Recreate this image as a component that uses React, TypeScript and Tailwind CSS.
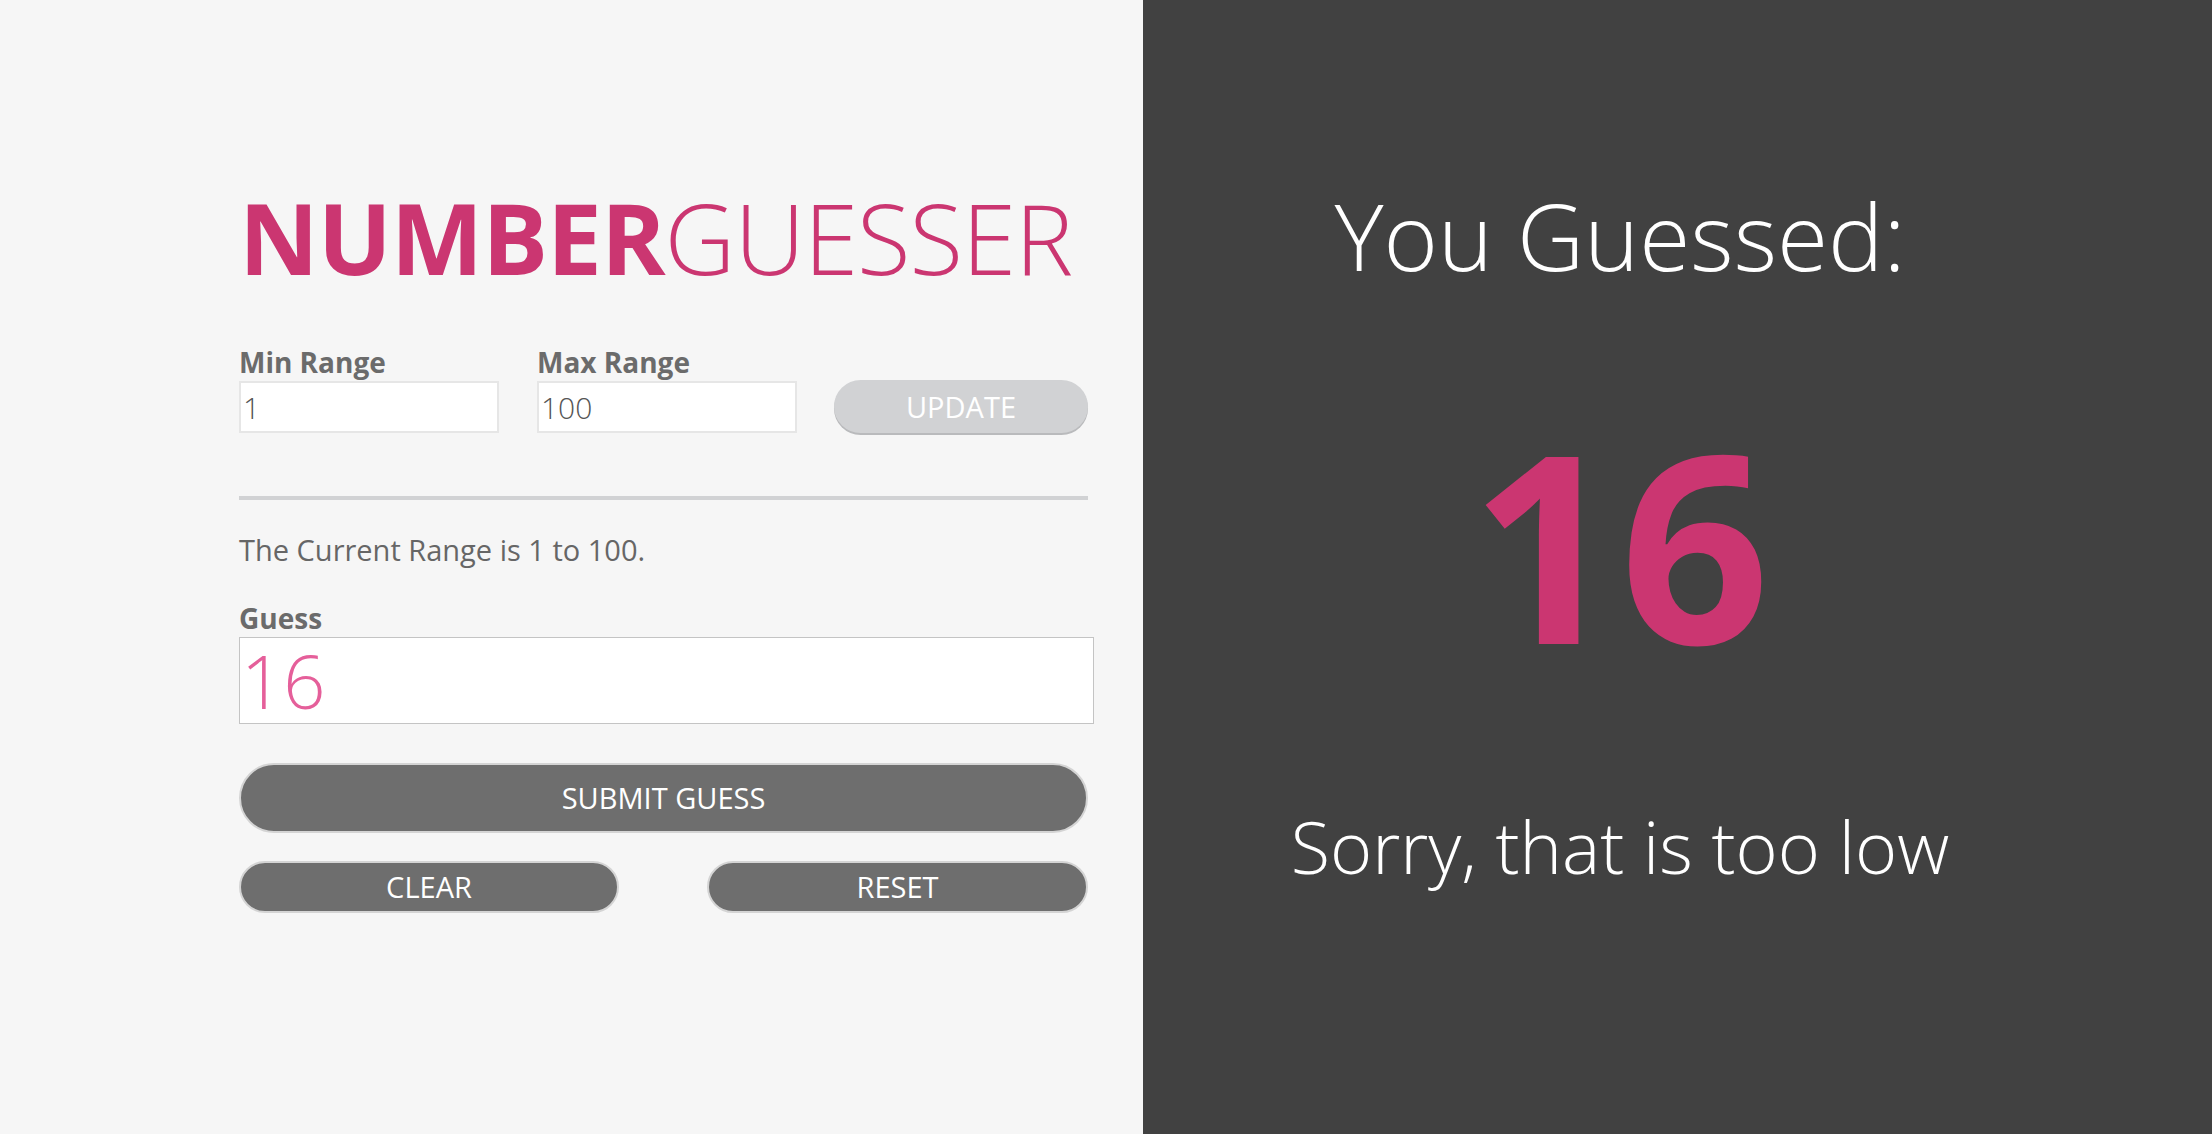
import React from 'react'

const font = { fontFamily: '"Open Sans", "Liberation Sans", sans-serif' }

function Label({ children }: { children: React.ReactNode }) {
  return <label className="block text-[28px] leading-none font-bold text-[#6b6b6b]">{children}</label>
}

export default function App() {
  return (
    <div style={font} className="flex w-[2212px] h-[1134px] overflow-hidden">
      <section className="w-[1143px] h-full bg-[#f6f6f6] pl-[239px]">
        <div className="w-[855px] flex flex-col">
          <h1 className="mt-[188px] text-[98px] leading-none text-[#cb3671] tracking-[-1px]">
            <span className="font-bold">NUMBER</span>
            <span className="font-light">GUESSER</span>
          </h1>

          <div className="mt-[62px] flex items-end w-[849px]">
            <div className="flex flex-col gap-[5px] w-[260px]">
              <Label>Min Range</Label>
              <input
                defaultValue="1"
                className="h-[52px] w-[260px] bg-white border-2 border-[#e6e6e6] px-[2px] text-[30px] font-light text-[#555] outline-none"
              />
            </div>
            <div className="flex flex-col gap-[5px] w-[260px] ml-[38px]">
              <Label>Max Range</Label>
              <input
                defaultValue="100"
                className="h-[52px] w-[260px] bg-white border-2 border-[#e6e6e6] px-[2px] text-[30px] font-light text-[#555] outline-none"
              />
            </div>
            <button className="ml-auto h-[53px] w-[254px] rounded-full bg-[#d1d2d4] text-white text-[29px] shadow-[0_2px_0_#b9babc]">
              UPDATE
            </button>
          </div>

          <div className="mt-[63px] h-[4px] w-[849px] bg-[#d1d2d4]" />

          <p className="mt-[35px] text-[29px] leading-none text-[#666]">The Current Range is 1 to 100.</p>

          <div className="mt-[40px] flex flex-col gap-[5px]">
            <Label>Guess</Label>
            <input
              defaultValue="16"
              className="h-[87px] w-[855px] bg-white border border-[#c4c4c4] pl-[1px] text-[74px] font-light text-[#e55f9a] outline-none"
            />
          </div>

          <button className="mt-[39px] h-[70px] w-[849px] rounded-full bg-[#6e6e6e] border-2 border-[#d4d4d4] text-white text-[29px]">
            SUBMIT GUESS
          </button>

          <div className="mt-[28px] flex justify-between w-[849px]">
            <button className="h-[52px] w-[380px] rounded-full bg-[#6e6e6e] border-2 border-[#d4d4d4] text-white text-[29px]">
              CLEAR
            </button>
            <button className="h-[52px] w-[381px] rounded-full bg-[#6e6e6e] border-2 border-[#d4d4d4] text-white text-[29px]">
              RESET
            </button>
          </div>
        </div>
      </section>

      <section className="flex-1 h-full bg-[#414141]">
        <div className="w-[954px] flex flex-col items-center text-center">
          <h2 className="mt-[189px] text-[93px] leading-none font-light text-white">You Guessed:</h2>
          <p className="mt-[130px] text-[262px] leading-none font-bold text-[#cb3671]">16</p>
          <p className="mt-[136px] text-[72px] leading-none font-light text-white">Sorry, that is too low</p>
        </div>
      </section>
    </div>
  )
}
